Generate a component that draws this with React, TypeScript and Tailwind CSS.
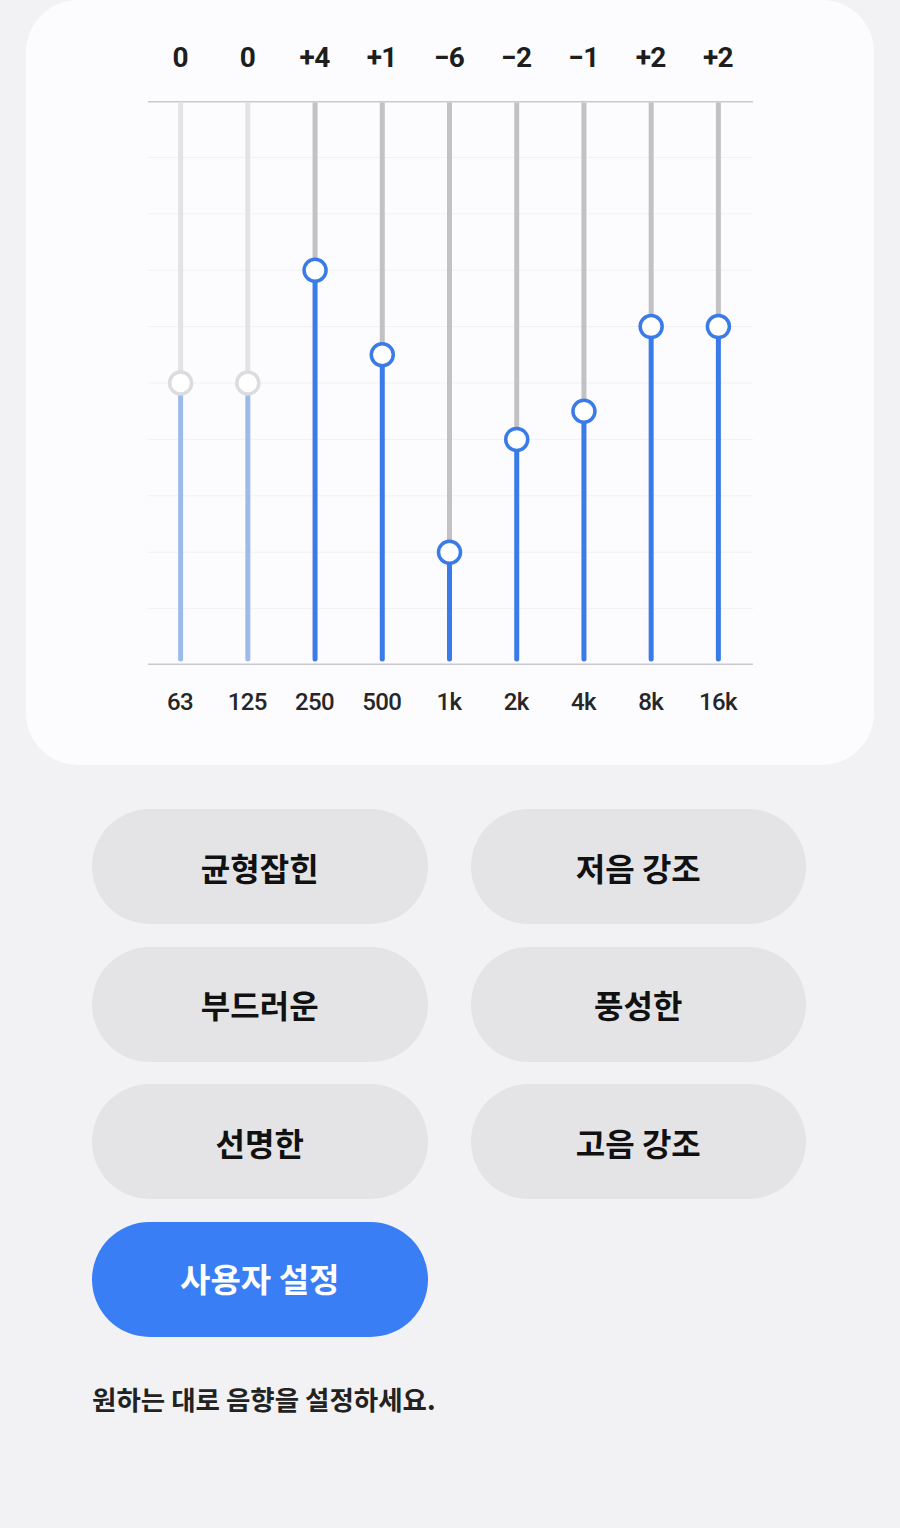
import * as React from "react";

const bands = [
  { freq: "63", value: 0, disabled: true },
  { freq: "125", value: 0, disabled: true },
  { freq: "250", value: 4 },
  { freq: "500", value: 1 },
  { freq: "1k", value: -6 },
  { freq: "2k", value: -2 },
  { freq: "4k", value: -1 },
  { freq: "8k", value: 2 },
  { freq: "16k", value: 2 },
];

const presets = ["균형잡힌", "저음 강조", "부드러운", "풍성한", "선명한", "고음 강조"];

const fmt = (v: number) => (v > 0 ? `+${v}` : v < 0 ? `−${Math.abs(v)}` : "0");

const W = 605;
const H = 564;
const COL = W / 9;
const STEP = H / 20;

const EqChart: React.FC = () => (
  <svg width={W} height={H} viewBox={`0 0 ${W} ${H}`} className="block">
    {Array.from({ length: 9 }).map((_, k) => (
      <line key={k} x1={0} x2={W} y1={STEP * 2 * (k + 1)} y2={STEP * 2 * (k + 1)} stroke="#f1f1f4" strokeWidth={1} />
    ))}
    <line x1={0} x2={W} y1={0.75} y2={0.75} stroke="#c9c9cd" strokeWidth={1.5} />
    <line x1={0} x2={W} y1={H - 0.75} y2={H - 0.75} stroke="#c9c9cd" strokeWidth={1.5} />
    {bands.map((b, i) => {
      const cx = COL * i + COL / 2 - 1;
      const cy = H / 2 - b.value * STEP;
      const top = b.disabled ? "#e3e3e7" : "#c2c2c6";
      const fill = b.disabled ? "#9dbbea" : "#3b7be8";
      const ring = b.disabled ? "#dcdcdf" : "#3b7be8";
      return (
        <g key={b.freq}>
          <line x1={cx} x2={cx} y1={1.5} y2={cy} stroke={top} strokeWidth={5} />
          <line x1={cx} x2={cx} y1={cy} y2={H - 6} stroke={fill} strokeWidth={5} strokeLinecap="round" />
          <circle cx={cx} cy={cy} r={11} fill="#ffffff" stroke={ring} strokeWidth={3.5} />
        </g>
      );
    })}
  </svg>
);

const App: React.FC = () => {
  return (
    <div className="min-h-[1528px] bg-[#f2f2f4] pb-10" style={{ fontFamily: "Roboto, 'Noto Sans CJK KR', sans-serif" }}>
      <section className="mx-[26px] rounded-[52px] bg-[#fcfcfe] pt-[38px] pb-[43px]">
        <div className="mx-auto w-[605px]">
          <div className="grid h-[40px] -translate-x-px grid-cols-9 text-center text-[28px] font-bold leading-[40px] tracking-tight text-[#1e1e1e]">
            {bands.map((b) => (
              <span key={b.freq}>{fmt(b.value)}</span>
            ))}
          </div>
          <div className="mt-[23px]">
            <EqChart />
          </div>
          <div className="mt-[17px] grid h-[40px] -translate-x-px grid-cols-9 text-center text-[24px] font-medium leading-[40px] tracking-tight text-[#262626]">
            {bands.map((b) => (
              <span key={b.freq}>{b.freq}</span>
            ))}
          </div>
        </div>
      </section>

      <div className="mx-[92px] mt-[44px] w-[714px]" style={{ fontFamily: "'Noto Sans CJK KR', sans-serif" }}>
        <div className="grid grid-cols-2 gap-x-[43px] gap-y-[22.5px]">
          {presets.map((p) => (
            <button key={p} className="h-[115px] rounded-full bg-[#e4e4e7] text-[32px] font-bold text-[#111111]">
              {p}
            </button>
          ))}
          <button className="h-[115px] rounded-full bg-[#3a7ef6] text-[33px] font-bold text-white">사용자 설정</button>
        </div>
        <p className="mt-[44px] text-[26.5px] font-bold leading-[36px] text-[#222222]">원하는 대로 음향을 설정하세요.</p>
      </div>
    </div>
  );
};

export default App;
